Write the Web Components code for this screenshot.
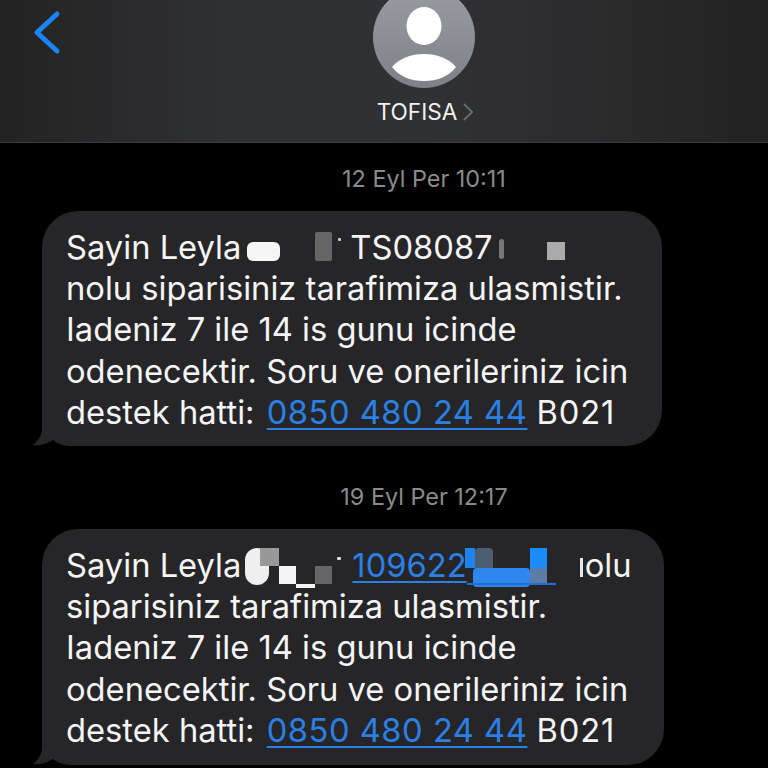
<!DOCTYPE html>
<html lang="tr">
<head>
<meta charset="utf-8">
<title>TOFISA</title>
<style>
  html, body { margin: 0; background: #000; }
  body { width: 768px; height: 768px; overflow: hidden; font-family: Inter, "Liberation Sans", sans-serif; }
  .code { letter-spacing: 0.8px; }
</style>
</head>
<body>
<sms-header name="TOFISA"></sms-header>

<sms-time>12 Eyl Per 10:11</sms-time>
<sms-bubble>Sayin Leyla<sms-redact w="109" patches='[[6,-17,33,19,"#f6f6f6",6],[74,-27,17,29,"#666",2],[97,-21,3,3,"#ccc",1]]'></sms-redact>TS08087<sms-redact w="100" patches='[[6,-20,5,20,"#77777a",3],[54,-17,18,18,"#aaa",0]]'></sms-redact><br>nolu siparisiniz tarafimiza ulasmistir.<br>Iadeniz 7 ile 14 is gunu icinde<br>odenecektir. Soru ve onerileriniz icin<br>destek hatti: <sms-link class="phone">0850 480 24 44</sms-link> <span class="code">B021</span></sms-bubble>

<sms-time class="later">19 Eyl Per 12:17</sms-time>
<sms-bubble class="wide">Sayin Leyla<sms-redact w="111" patches='[[4,-29,24,37,"#efefef",12],[19,-29,19,18,"#999",0],[38,-11,17,18,"#f4f4f4",0],[55,7,19,4,"#f4f4f4",0],[74,-11,17,18,"#666",0],[96,-20,4,3,"#ddd",1]]'></sms-redact><sms-link>109622<sms-redact w="89" patches='[[-2,-29,10,20,"#1d84ee",0],[8,-29,18,37,"#4c5c72",4],[6,-9,57,19,"#2f86ee",4],[63,-29,17,20,"#1a8cf8",0],[63,-9,17,17,"#5a7ca6",0],[0,6,89,2,"#1f6fd0",0]]'></sms-redact></sms-link><sms-redact w="29" patches='[[24,-19,3,19,"#e8e8e8",0]]'></sms-redact>olu<br>siparisiniz tarafimiza ulasmistir.<br>Iadeniz 7 ile 14 is gunu icinde<br>odenecektir. Soru ve onerileriniz icin<br>destek hatti: <sms-link class="phone">0850 480 24 44</sms-link> <span class="code">B021</span></sms-bubble>

<script>
class SmsHeader extends HTMLElement {
  constructor() {
    super();
    this.attachShadow({ mode: 'open' });
  }

  connectedCallback() {
    const name = this.getAttribute('name') || '';
    this.shadowRoot.innerHTML = `
      <style>
        :host {
          display: block;
          position: relative;
          height: 143px;
          box-sizing: border-box;
          overflow: hidden;
          border-bottom: 1px solid #3a3b3d;
          background: linear-gradient(90deg, #232323 0%, #2f3032 30%, #303133 55%, #2a2a2b 80%, #222 100%);
        }
        .back { position: absolute; left: 32px; top: 9px; }
        .contact {
          display: flex;
          flex-direction: column;
          align-items: center;
          margin-left: 80px;
          margin-top: -14px;
        }
        .avatar { display: block; width: 102px; height: 102px; }
        .name {
          display: flex;
          align-items: center;
          gap: 6px;
          margin-top: 11px;
          margin-left: 2px;
          font-size: 22.6px;
          line-height: 26px;
          color: #f0f0f0;
        }
      </style>
      <svg class="back" width="32" height="48" viewBox="0 0 32 48" aria-hidden="true">
        <path d="M25 5 L5 23.5 L25 42" fill="none" stroke="#1a84f3" stroke-width="5" stroke-linecap="round" stroke-linejoin="round"/>
      </svg>
      <div class="contact">
        <svg class="avatar" viewBox="0 0 102 102" aria-hidden="true">
          <defs>
            <linearGradient id="av" x1="0" y1="0" x2="0" y2="1">
              <stop offset="0" stop-color="#9a9ca4"/>
              <stop offset="1" stop-color="#7f8087"/>
            </linearGradient>
          </defs>
          <circle cx="51" cy="51" r="51" fill="url(#av)"/>
          <ellipse cx="51" cy="40" rx="17.5" ry="19" fill="#fff"/>
          <path d="M19 81 C27 72 38 68 51 68 C64 68 75 72 83 81 C75 91 64 95 51 95 C38 95 27 91 19 81 Z" fill="#fff"/>
        </svg>
        <div class="name">
          <span>${name}</span>
          <svg width="10" height="18" viewBox="0 0 10 18" aria-hidden="true">
            <path d="M1 1 L9 9 L1 17" fill="none" stroke="#67686a" stroke-width="2"/>
          </svg>
        </div>
      </div>
    `;
  }
}

class SmsTime extends HTMLElement {
  constructor() {
    super();
    this.attachShadow({ mode: 'open' });
    this.shadowRoot.innerHTML = `
      <style>
        :host {
          display: block;
          box-sizing: border-box;
          height: 68px;
          padding-top: 23px;
          margin-left: 80px;
          text-align: center;
          font-size: 23.4px;
          line-height: 26px;
          color: #8a8a8c;
        }
        :host(.later) { height: 83px; padding-top: 38px; }
      </style>
      <slot></slot>
    `;
  }
}

class SmsBubble extends HTMLElement {
  constructor() {
    super();
    this.attachShadow({ mode: 'open' });
    this.shadowRoot.innerHTML = `
      <style>
        :host {
          display: block;
          position: relative;
          isolation: isolate;
          box-sizing: border-box;
          width: 620px;
          height: 235px;
          margin-left: 42px;
          padding: 16px 0 0 24px;
          border-radius: 36px;
          background: #262628;
          color: #f4f4f4;
          font-size: 32.7px;
          line-height: 41.2px;
          white-space: nowrap;
        }
        :host(.wide) { width: 622px; height: 236px; }
        .tail { position: absolute; left: -12px; bottom: 0; z-index: -1; }
      </style>
      <slot></slot>
      <svg class="tail" width="50" height="40" viewBox="0 0 50 40" aria-hidden="true">
        <path d="M12 0 L12 24 C11 31 7 36 3 39 C10 40 17 38 23 34 C28 38 34 40 42 40 L50 40 L50 0 Z" fill="#262628"/>
      </svg>
    `;
  }
}

class SmsLink extends HTMLElement {
  constructor() {
    super();
    this.attachShadow({ mode: 'open' });
    // no whitespace around <a>, it would show up as a space in the line
    this.shadowRoot.innerHTML = `<style>
        :host { display: inline; color: #2a80e4; }
        :host(.phone) { margin-left: 3px; letter-spacing: 0.5px; }
        a { color: inherit; text-decoration: underline; text-decoration-thickness: 2px; text-underline-offset: 4px; }
      </style><a><slot></slot></a>`;
  }
}

// censored part of a message: keeps its width in the line, patches lie over it
class SmsRedact extends HTMLElement {
  constructor() {
    super();
    this.attachShadow({ mode: 'open' });
  }

  connectedCallback() {
    let patches = [];
    try { patches = JSON.parse(this.getAttribute('patches') || '[]'); }
    catch(e) { patches = []; }

    this.shadowRoot.innerHTML = `
      <style>
        :host {
          display: inline-block;
          position: relative;
          height: 0;
          width: ${this.getAttribute('w') || 0}px;
        }
        i { position: absolute; display: block; filter: blur(0.6px); }
      </style>
      ${patches.map(([x, y, w, h, c, r]) => `
        <i style="left:${x}px;top:${y}px;width:${w}px;height:${h}px;background:${c};border-radius:${r}px"></i>
      `).join('')}
    `;
  }
}

customElements.define('sms-header', SmsHeader);
customElements.define('sms-time', SmsTime);
customElements.define('sms-bubble', SmsBubble);
customElements.define('sms-link', SmsLink);
customElements.define('sms-redact', SmsRedact);
</script>
</body>
</html>
